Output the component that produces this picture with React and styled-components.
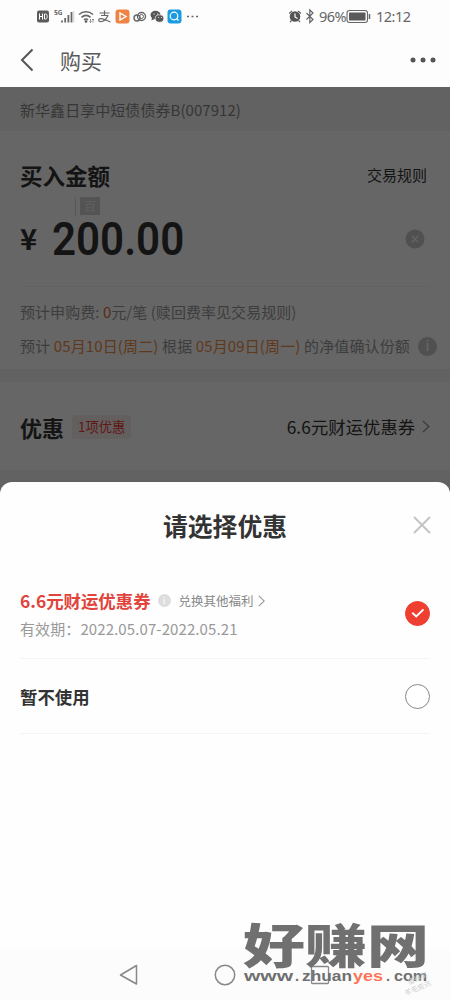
import React, { useState } from 'react'
import styled, { createGlobalStyle } from 'styled-components'

const coupons = [
    { id: 'coupon', title: '6.6元财运优惠券', link: '兑换其他福利', date: '有效期：2022.05.07-2022.05.21' },
    { id: 'none', title: '暂不使用' },
]

function StatusBar() {
    return (
        <StatusContainer>
            <svg width='163' height='20' viewBox='0 0 163 20' fill='none' stroke='#666'>
                <rect x='1' y='4.5' width='12' height='12' rx='2' fill='#5c5c5c' stroke='none' />
                <path d='M3.5 7.5v6M6.5 7.5v6M3.5 10.5h3M8.5 8h1.2c2 0 2 5 0 5H8.5z' stroke='#fff' strokeWidth='1' />
                <text x='18' y='9' fontSize='6.5' fontWeight='700' fill='#555' stroke='none'>5G</text>
                <path d='M26 16.500v-2M29.200 16.500v-4.500M32.400 16.500V9M35.500 16.500V6' strokeWidth='1.8' />
                <path d='M37.800 16.500V5' stroke='#ccc' strokeWidth='1' />
                <path d='M43 8.500c4-3.600 10-3.600 14 0M45.500 11.300c2.700-2.300 6.300-2.300 9 0M48 13.800c1.200-1 2.800-1 4 0' strokeWidth='1.600' />
                <circle cx='50' cy='15.500' r='1.300' fill='#555' stroke='none' />
                <path d='M54.500 13v3.500m-1-1l1 1 1-1M57 16.500V13m-1 1l1-1 1 1' strokeWidth='.7' />
                <path d='M63.500 7h10M68.500 4.500v5M65 9.500h7.500M72 9.500c-2 4-5 6.500-8 6-2-.4-1.800-2.600.7-2.800 3-.2 5 1.500 9.800 3.300' strokeWidth='1.200' />
                <rect x='79.500' y='3.500' width='14' height='14' rx='3' fill='#ee8344' stroke='none' />
                <path d='M84 7v7l6-3.500z' stroke='#fff' strokeWidth='1.400' />
                <circle cx='105.500' cy='10.500' r='4' strokeWidth='1.400' />
                <circle cx='101' cy='12' r='3' strokeWidth='1.400' />
                <circle cx='105.500' cy='10.500' r='2' strokeWidth='1' />
                <ellipse cx='119.500' cy='9' rx='5' ry='4.200' fill='#555' stroke='none' />
                <path d='M116 11.500l-.5 3 3-1.500z' fill='#555' stroke='none' />
                <ellipse cx='123.500' cy='12.500' rx='4.300' ry='3.700' fill='#555' stroke='#fff' strokeWidth='.7' />
                <path d='M117.500 8h1M121 8h1M122 11.500h.8M125 11.500h.8' stroke='#fff' strokeWidth='1' />
                <rect x='131.500' y='3.500' width='14' height='14' rx='3' fill='#1b9ce2' stroke='none' />
                <circle cx='138' cy='10' r='3.800' stroke='#fff' strokeWidth='1.200' />
                <path d='M140.500 12.500l2 2' stroke='#fff' strokeWidth='1.200' />
                <path d='M151 10.500h2M155.500 10.500h2M160 10.500h2' strokeWidth='1.700' />
            </svg>
            <StatusRight>
                <svg width='28' height='20' viewBox='0 0 28 20' fill='none' stroke='#666'>
                    <circle cx='6' cy='10.500' r='5.300' fill='#555' stroke='none' />
                    <path d='M0 7.500L3 5M12 7.500L9 5M2.500 14.500L1 16M9.500 14.500l1.500 1.500' strokeWidth='1.300' />
                    <path d='M6 7.500v3.500l2.500 1.500' stroke='#fff' strokeWidth='1.200' />
                    <path d='M17.500 7l6.500 6.500-3.200 3V4l3.200 3-6.500 6.500' strokeWidth='1.200' />
                </svg>
                <StatusText $width='26px'>96%</StatusText>
                <svg width='26' height='20' viewBox='0 0 26 20' fill='none' stroke='#666'>
                    <rect x='1' y='4.500' width='20.500' height='12' rx='2.500' strokeWidth='1.100' />
                    <rect x='3' y='6.500' width='16.500' height='8' rx='.7' fill='#5a5a5a' stroke='none' />
                    <path d='M23.500 8v5' strokeWidth='1.500' />
                </svg>
                <StatusText $width='37px'>12:12</StatusText>
            </StatusRight>
        </StatusContainer>
    )
}

function Arrow({ size = 12, color = '#999' }) {
    return (
        <svg width={size * 0.6} height={size} viewBox='0 0 7.2 12' fill='none' stroke={color} strokeWidth='1.1'>
            <path d='M.8.8L6.300 6 .8 11.200' />
        </svg>
    )
}

function App() {
    const [selected, setSelected] = useState('coupon')

    return (
        <Phone>
            <GlobalStyle />
            <StatusBar />
            <Header>
                <svg width='14' height='24' viewBox='0 0 14 24' fill='none' stroke='#555' strokeWidth='2'>
                    <path d='M12.500 1.500L2 12l10.500 10.500' />
                </svg>
                <h1>购买</h1>
                <svg width='26' height='6' viewBox='0 0 26 6' fill='#555'>
                    <circle cx='3' cy='3' r='2.500' />
                    <circle cx='13' cy='3' r='2.500' />
                    <circle cx='23' cy='3' r='2.500' />
                </svg>
            </Header>

            <Content>
                <FundName>新华鑫日享中短债债券B(007912)</FundName>
                <BuyPanel>
                    <TitleRow>
                        <h2>买入金额</h2>
                        <span>交易规则</span>
                    </TitleRow>
                    <UnitTip><span>百</span></UnitTip>
                    <AmountRow>
                        <Currency>¥</Currency>
                        <Amount>200.00</Amount>
                        <svg width='20' height='20' viewBox='0 0 20 20'>
                            <circle cx='10' cy='10' r='9.500' fill='#c8c8c8' />
                            <path d='M6.800 6.800l6.400 6.400M13.200 6.800l-6.400 6.400' stroke='#f5f5f5' strokeWidth='1.500' />
                        </svg>
                    </AmountRow>
                    <Fee>预计申购费: <em>0</em>元/笔 (赎回费率见交易规则)</Fee>
                    <Notice>
                        <span>预计 <em>05月10日(周二)</em> 根据 <em>05月09日(周一)</em> 的净值确认份额</span>
                        <InfoDot $size={19} $color='#c8c8c8'>i</InfoDot>
                    </Notice>
                </BuyPanel>
                <CouponPanel>
                    <h2>优惠</h2>
                    <Tag>1项优惠</Tag>
                    <CouponName>6.6元财运优惠券</CouponName>
                    <Arrow size={13} color='#888' />
                </CouponPanel>
                <Mask />
            </Content>

            <Sheet>
                <SheetHeader>
                    <h3>请选择优惠</h3>
                    <CloseButton type='button'>
                        <svg width='18' height='18' viewBox='0 0 18 18' stroke='#c4c4c4' strokeWidth='2'>
                            <path d='M1 1l16 16M17 1L1 17' />
                        </svg>
                    </CloseButton>
                </SheetHeader>
                {coupons.map((item) => (
                    <Option key={item.id} $tall={!!item.date} onClick={() => setSelected(item.id)}>
                        <div>
                            <OptionTitle $red={!!item.date}>
                                <strong>{item.title}</strong>
                                {item.link && (
                                    <>
                                        <InfoDot $size={13} $color='#ddd'>i</InfoDot>
                                        <small>{item.link}</small>
                                        <Arrow size={12} />
                                    </>
                                )}
                            </OptionTitle>
                            {item.date && <OptionDate>{item.date}</OptionDate>}
                        </div>
                        <Radio $checked={selected === item.id}>
                            {selected === item.id && (
                                <svg width='14' height='10' viewBox='0 0 14 10' fill='none' stroke='#fff' strokeWidth='2'>
                                    <path d='M1.300 4.700l3.900 3.700 7.300-7' />
                                </svg>
                            )}
                        </Radio>
                    </Option>
                ))}
            </Sheet>

            <NavBar>
                <svg width='20' height='22' viewBox='0 0 20 22' fill='none' stroke='#888' strokeWidth='1.500'>
                    <path d='M17.500 1.500v18.500L1.500 11z' strokeLinejoin='round' />
                </svg>
                <svg width='22' height='22' viewBox='0 0 22 22' fill='none' stroke='#888' strokeWidth='1.500'>
                    <circle cx='11' cy='11' r='9.700' />
                </svg>
                <svg width='20' height='20' viewBox='0 0 20 20' fill='none' stroke='#888' strokeWidth='1.300'>
                    <rect x='1.500' y='1.500' width='17' height='17' rx='1' />
                </svg>
            </NavBar>

            <Watermark>
                <SiteName>好赚网</SiteName>
                <SiteUrl viewBox='0 0 186 20'>
                    <text x='1' y='13' textLength='49' lengthAdjust='spacingAndGlyphs'>www</text>
                    <text x='52' y='13'>.</text>
                    <text x='59' y='13' textLength='50' lengthAdjust='spacingAndGlyphs'>zhuan</text>
                    <text className='yes' x='110' y='13' textLength='30' lengthAdjust='spacingAndGlyphs'>yes</text>
                    <text x='143' y='13'>.</text>
                    <text x='151' y='13' textLength='33' lengthAdjust='spacingAndGlyphs'>com</text>
                </SiteUrl>
            </Watermark>
            <Stamp>值得买<br />羊毛资讯</Stamp>
        </Phone>
    )
}

export default App

const GlobalStyle = createGlobalStyle`
    *{
        box-sizing: border-box;
    }
    body{
        margin: 0;
        background: #fdfdfd;
        font-family: 'Noto Sans CJK SC', sans-serif;
    }
    h1, h2, h3, p{
        margin: 0;
    }
    svg{
        flex: none;
        display: block;
    }
    em{
        font-style: normal;
    }
`

const Phone = styled.div`
    position: relative;
    display: flex;
    flex-direction: column;
    width: 450px;
    height: 1000px;
    overflow: hidden;
    background: #fdfdfd;
    white-space: nowrap;
`

const StatusContainer = styled.div`
    display: flex;
    height: 33px;
    padding: 6px 36px 0;
`

const StatusRight = styled.div`
    display: flex;
    margin-left: auto;
`

const StatusText = styled.span`
    width: ${({ $width }) => $width};
    margin: 0 1px 0 2px;
    font: 14.5px/21px 'Noto Sans', sans-serif;
    letter-spacing: -0.5px;
    color: #666;
    &:last-child{
        margin-left: 4px;
    }
`

const Header = styled.header`
    display: flex;
    align-items: center;
    height: 54px;
    padding: 0 14px 0 20px;
    h1{
        margin: 0 auto 0 26px;
        font-size: 21px;
        font-weight: 400;
        color: #5a5a5a;
    }
`

const Content = styled.main`
    position: relative;
    flex: none;
    height: 412px;
    background: #f5f5f5;
`

const FundName = styled.p`
    height: 44px;
    padding-left: 20px;
    font-size: 15px;
    line-height: 45px;
    letter-spacing: 0.05px;
    color: #888;
`

const BuyPanel = styled.section`
    height: 238px;
    padding: 0 14px 0 20px;
    background: #fff;
`

const TitleRow = styled.div`
    display: flex;
    align-items: center;
    justify-content: space-between;
    height: 66px;
    padding: 21px 9px 0 0;
    h2{
        font-size: 22.5px;
        font-weight: 700;
        color: #333;
    }
    span{
        font-size: 15px;
        color: #333;
    }
`

const UnitTip = styled.div`
    height: 19px;
    margin-left: 55px;
    padding-left: 4px;
    border-left: 1px solid #ddd;
    span{
        display: block;
        width: 20px;
        height: 18px;
        font-size: 12px;
        line-height: 18px;
        text-align: center;
        color: #eee;
        background: #d2d2d2;
    }
`

const AmountRow = styled.div`
    display: flex;
    align-items: center;
    height: 46px;
    padding-right: 11px;
    svg{
        margin-left: auto;
    }
`

const Currency = styled.span`
    width: 32px;
    font-size: 29px;
    font-weight: 700;
    line-height: 42px;
    padding-bottom: 4px;
    color: #333;
`

const Amount = styled.strong`
    font: 600 46px/46px 'Roboto', sans-serif;
    color: #333;
    transform: scaleX(0.915);
    transform-origin: left;
`

const Fee = styled.p`
    height: 50px;
    margin: 24px 6px 0 0;
    border-top: 1px solid #f5f5f5;
    font-size: 15px;
    line-height: 50px;
    letter-spacing: 0.05px;
    color: #999;
    em{
        color: #d9743a;
    }
`

const Notice = styled.div`
    display: flex;
    align-items: center;
    justify-content: space-between;
    height: 20px;
    margin-right: -1px;
    font-size: 15px;
    line-height: 20px;
    letter-spacing: 0.13px;
    color: #999;
    em{
        color: #f08c46;
    }
`

const InfoDot = styled.i`
    flex: none;
    width: ${({ $size }) => $size}px;
    height: ${({ $size }) => $size}px;
    border-radius: 50%;
    background: ${({ $color }) => $color};
    font: 700 ${({ $size }) => $size * 0.75}px/${({ $size }) => $size}px 'Liberation Sans', sans-serif;
    text-align: center;
    color: #f5f5f5;
`

const CouponPanel = styled.section`
    display: flex;
    align-items: center;
    height: 88px;
    margin-top: 13px;
    padding: 1px 20px 0;
    background: #fff;
    h2{
        font-size: 22px;
        color: #333;
    }
`

const Tag = styled.span`
    height: 24px;
    margin-left: 8px;
    padding: 0 6px;
    border-radius: 3px;
    background: #fbeeee;
    font-size: 13.3px;
    line-height: 23px;
    color: #ee3d3d;
`

const CouponName = styled.span`
    margin: 0 7px 0 auto;
    font-size: 17.3px;
    letter-spacing: 0.1px;
    color: #333;
`

const Mask = styled.div`
    position: absolute;
    inset: 0;
    background: rgba(0, 0, 0, 0.6);
`

const Sheet = styled.section`
    position: relative;
    flex: none;
    height: 466px;
    margin-top: -17px;
    padding: 0 20px;
    border-radius: 12px 12px 0 0;
    background: #fefefe;
`

const SheetHeader = styled.div`
    display: grid;
    grid-template-columns: 1fr auto 1fr;
    align-items: center;
    height: 86px;
    h3{
        grid-column: 2;
        font-size: 24.8px;
        color: #333;
    }
`

const CloseButton = styled.button`
    justify-self: end;
    margin-right: -1px;
    padding: 0;
    border: 0;
    background: none;
`

const Option = styled.div`
    display: flex;
    align-items: center;
    justify-content: space-between;
    height: ${({ $tall }) => ($tall ? 91 : 75)}px;
    border-bottom: 1px solid #f5f5f5;
`

const OptionTitle = styled.div`
    display: flex;
    align-items: center;
    height: 28px;
    padding-top: ${({ $red }) => ($red ? 3 : 0)}px;
    strong{
        font-size: 17.4px;
        color: ${({ $red }) => ($red ? '#e0443c' : '#333')};
    }
    i{
        margin: 0 8px 0 7px;
    }
    small{
        margin-right: 4px;
        font-size: 12.5px;
        color: #888;
    }
`

const OptionDate = styled.p`
    height: 28px;
    padding-top: 1px;
    font-size: 15px;
    line-height: 30px;
    letter-spacing: 0.1px;
    color: #999;
`

const Radio = styled.span`
    display: flex;
    align-items: center;
    justify-content: center;
    width: 25px;
    height: 25px;
    border: 1px solid ${({ $checked }) => ($checked ? '#ee3f31' : '#888')};
    border-radius: 50%;
    background: ${({ $checked }) => ($checked ? '#ee3f31' : '#fff')};
`

const NavBar = styled.nav`
    display: flex;
    align-items: center;
    justify-content: space-between;
    height: 52px;
    padding: 2px 120px 0 119px;
    background: #fcfcfc;
`

const Watermark = styled.div`
    position: absolute;
    top: 917px;
    left: 243px;
    width: 186px;
`

const SiteName = styled.div`
    width: 186px;
    height: 50px;
    font-size: 62px;
    font-weight: 900;
    line-height: 50px;
    color: #707070;
    transform: scaleY(0.76);
`

const SiteUrl = styled.svg`
    width: 186px;
    height: 20px;
    margin-top: 1px;
    font: 700 14.5px 'Liberation Sans', sans-serif;
    fill: #707070;
    .yes{
        fill: #ff7358;
    }
`

const Stamp = styled.div`
    position: absolute;
    top: 975px;
    left: 402px;
    font-size: 7px;
    line-height: 9px;
    text-align: right;
    color: #ccc;
    transform: rotate(-22deg);
`
